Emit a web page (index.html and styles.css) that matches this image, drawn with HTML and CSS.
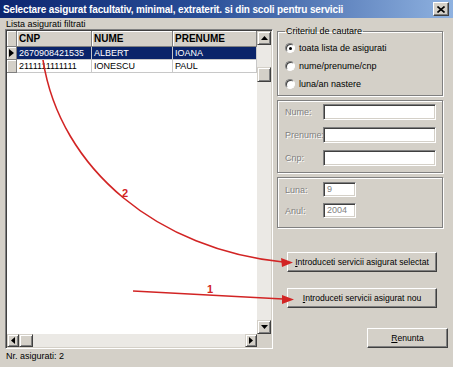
FILE: index.html
```html
<!DOCTYPE html>
<html>
<head>
<meta charset="utf-8">
<link rel="stylesheet" href="styles.css">
</head>
<body>
<div class="window">
  <div class="titlebar">
    <span class="title">Selectare asigurat facultativ, minimal, extraterit. si din scoli pentru servicii</span>
    <span class="close"><svg width="8" height="7" viewBox="0 0 8 7"><path d="M0.5 0.5 L7.5 6.5 M7.5 0.5 L0.5 6.5" stroke="#000" stroke-width="1.6"/></svg></span>
  </div>
  <div class="main">
    <div class="left">
      <div class="caption">Lista asigurati filtrati</div>
      <div class="gridframe">
        <div class="gridtop">
          <div class="table">
            <div class="row head">
              <div class="cell ind"></div>
              <div class="cell c1">CNP</div>
              <div class="cell c2">NUME</div>
              <div class="cell c3">PRENUME</div>
            </div>
            <div class="row sel">
              <div class="cell ind"><svg width="5" height="8" viewBox="0 0 5 8"><path d="M0 0 L5 4 L0 8 Z" fill="#000"/></svg></div>
              <div class="cell c1">2670908421535</div>
              <div class="cell c2">ALBERT</div>
              <div class="cell c3">IOANA</div>
            </div>
            <div class="row">
              <div class="cell ind"></div>
              <div class="cell c1">2111111111111</div>
              <div class="cell c2">IONESCU</div>
              <div class="cell c3">PAUL</div>
            </div>
          </div>
          <div class="vscroll">
            <div class="sbtn vbtn"><svg width="7" height="4" viewBox="0 0 7 4"><path d="M0 4 L3.5 0 L7 4 Z" fill="#000"/></svg></div>
            <div class="vtrack"><div class="vthumb"></div></div>
            <div class="sbtn vbtn"><svg width="7" height="4" viewBox="0 0 7 4"><path d="M0 0 L3.5 4 L7 0 Z" fill="#000"/></svg></div>
          </div>
        </div>
        <div class="hscroll">
          <div class="sbtn hbtn"><svg width="4" height="7" viewBox="0 0 4 7"><path d="M4 0 L0 3.5 L4 7 Z" fill="#000"/></svg></div>
          <div class="sbtn hthumb"></div>
          <div class="htrack"></div>
          <div class="sbtn hbtn"><svg width="4" height="7" viewBox="0 0 4 7"><path d="M0 0 L4 3.5 L0 7 Z" fill="#000"/></svg></div>
          <div class="corner"></div>
        </div>
      </div>
      <div class="status">Nr. asigurati: 2</div>
    </div>
    <div class="right">
      <fieldset class="group criteria">
        <legend>Criteriul de cautare</legend>
        <div class="radiorow"><span class="radio checked"></span><span>toata lista de asigurati</span></div>
        <div class="radiorow"><span class="radio"></span><span>nume/prenume/cnp</span></div>
        <div class="radiorow"><span class="radio"></span><span>luna/an nastere</span></div>
      </fieldset>
      <div class="box names">
        <div class="field"><span class="lbl">Nume:</span><span class="input wide"></span></div>
        <div class="field"><span class="lbl">Prenume:</span><span class="input wide"></span></div>
        <div class="field"><span class="lbl">Cnp:</span><span class="input wide"></span></div>
      </div>
      <div class="box dates">
        <div class="field"><span class="lbl">Luna:</span><span class="input short">9</span></div>
        <div class="field"><span class="lbl">Anul:</span><span class="input short">2004</span></div>
      </div>
      <div class="buttons">
        <div class="btn b1"><span><u>I</u>ntroduceti servicii asigurat selectat</span></div>
        <div class="btn b2"><span><u>I</u>ntroduceti servicii asigurat nou</span></div>
        <div class="btn b3"><span><u>R</u>enunta</span></div>
      </div>
    </div>
  </div>
  <svg class="arrows" width="453" height="367" viewBox="0 0 453 367">
    <path d="M43 60 C 60 170, 160 250, 283 262" fill="none" stroke="#d22424" stroke-width="1.6"/>
    <path d="M293 262.5 L281 258 L282 267 Z" fill="#d22424"/>
    <path d="M133 291 L283 299" fill="none" stroke="#d22424" stroke-width="1.6"/>
    <path d="M294 299.6 L282 295 L282 304 Z" fill="#d22424"/>
    <text x="122" y="197" class="num">2</text>
    <text x="207" y="293" class="num">1</text>
  </svg>
</div>
</body>
</html>
```

FILE: styles.css
```css
html, body {
  margin: 0;
  padding: 0;
  background: #d4d0c8;
}

.window {
  position: relative;
  width: 453px;
  height: 367px;
  overflow: hidden;
  background: #d4d0c8;
  font-family: "Liberation Sans", Arial, sans-serif;
  font-size: 9px;
  color: #000;
}

.titlebar {
  height: 18px;
  display: flex;
  align-items: center;
  justify-content: space-between;
  padding: 0 4px 0 3px;
  background: linear-gradient(to right, #0c2670 0%, #2a4f98 45%, #8fb2e0 100%);
}

.title {
  color: #fff;
  font-weight: bold;
  font-size: 10px;
  letter-spacing: -0.15px;
  white-space: nowrap;
}

.close {
  width: 16px;
  height: 14px;
  box-sizing: border-box;
  background: #d4d0c8;
  border: 1px solid;
  border-color: #fff #404040 #404040 #fff;
  box-shadow: inset -1px -1px 0 #808080;
  display: flex;
  align-items: center;
  justify-content: center;
}

.main {
  display: flex;
  padding: 0 5px;
}

.left {
  width: 268px;
  display: flex;
  flex-direction: column;
}

.caption {
  height: 11px;
  box-sizing: border-box;
  padding: 2px 0 0 1px;
  line-height: 9px;
}

.gridframe {
  height: 320px;
  box-sizing: border-box;
  border: 1px solid;
  border-color: #808080 #fff #fff #808080;
  box-shadow: inset 1px 1px 0 #404040, inset -1px -1px 0 #d4d0c8;
  padding: 1px;
  display: flex;
  flex-direction: column;
}

.gridtop {
  display: flex;
  height: 303px;
}

.table {
  width: 250px;
  background: #fff;
}

.row {
  display: flex;
  height: 13px;
}

.row.head {
  height: 16px;
}

.cell {
  box-sizing: border-box;
  border-right: 1px solid #c8c8c8;
  border-bottom: 1px solid #c8c8c8;
  padding-left: 2px;
  line-height: 12px;
  white-space: nowrap;
  overflow: hidden;
  font-size: 9px;
}

.c1 { width: 75px; }
.c2 { width: 81px; }
.c3 { width: 84px; }

.ind {
  width: 10px;
  padding: 0;
  background: #d4d0c8;
  border-right: 1px solid #808080;
  border-bottom: 1px solid #808080;
  box-shadow: inset 1px 1px 0 #fff;
  display: flex;
  align-items: center;
  justify-content: center;
}

.head .cell {
  background: #d4d0c8;
  border-right: 1px solid #808080;
  border-bottom: 1px solid #808080;
  box-shadow: inset 1px 1px 0 #fff;
  font-weight: bold;
  line-height: 15px;
  font-size: 10px;
}

.sel .c1, .sel .c2, .sel .c3 {
  background: #0a246a;
  color: #fff;
}

.vscroll {
  width: 14px;
  display: flex;
  flex-direction: column;
}

.sbtn {
  box-sizing: border-box;
  background: #d4d0c8;
  border: 1px solid;
  border-color: #d4d0c8 #404040 #404040 #d4d0c8;
  box-shadow: inset 1px 1px 0 #fff, inset -1px -1px 0 #808080;
  display: flex;
  align-items: center;
  justify-content: center;
}

.vbtn {
  height: 14px;
}

.vtrack {
  flex: 1;
  background: #ebe9e5;
  padding-top: 22px;
}

.vthumb {
  height: 15px;
  box-sizing: border-box;
  background: #d4d0c8;
  border: 1px solid;
  border-color: #d4d0c8 #404040 #404040 #d4d0c8;
  box-shadow: inset 1px 1px 0 #fff, inset -1px -1px 0 #808080;
}

.hscroll {
  display: flex;
  height: 13px;
}

.hbtn {
  width: 12px;
}

.hthumb {
  width: 14px;
}

.htrack {
  flex: 1;
  background: #ebe9e5;
}

.corner {
  width: 14px;
  background: #d4d0c8;
}

.status {
  height: 12px;
  line-height: 12px;
  padding-left: 1px;
  margin-top: 1px;
}

.right {
  margin-left: 4px;
  width: 171px;
  display: flex;
  flex-direction: column;
}

.group {
  margin: 8px 0 0 0;
  padding: 3px 0 2px 7px;
  width: 166px;
  box-sizing: border-box;
  border: 1px solid #808080;
  box-shadow: 1px 1px 0 #fff, inset 1px 1px 0 #fff;
  min-width: 0;
}

.group legend {
  padding: 0 1px;
  margin-left: 0;
  line-height: 10px;
  font-size: 9px;
}

.radiorow {
  display: flex;
  align-items: center;
  height: 18px;
  gap: 4px;
}

.radio {
  position: relative;
  width: 10px;
  height: 10px;
  box-sizing: border-box;
  border-radius: 50%;
  background: #fff;
  border: 1px solid;
  border-color: #808080 #fff #fff #808080;
  box-shadow: inset 1px 1px 0 #404040;
}

.radio.checked::after {
  content: "";
  position: absolute;
  left: 3px;
  top: 3px;
  width: 3px;
  height: 3px;
  border-radius: 50%;
  background: #000;
}

.box {
  width: 166px;
  box-sizing: border-box;
  border: 1px solid #808080;
  box-shadow: 1px 1px 0 #fff, inset 1px 1px 0 #fff;
  padding: 3px 0 0 7px;
  display: flex;
  flex-direction: column;
}

.names {
  margin-top: 4px;
  height: 73px;
  gap: 7px;
}

.dates {
  margin-top: 4px;
  height: 51px;
  gap: 6px;
  padding-top: 4px;
}

.field {
  display: flex;
  align-items: center;
}

.lbl {
  width: 38px;
  color: #808080;
  text-shadow: 1px 1px 0 #fff;
  white-space: nowrap;
}

.input {
  box-sizing: border-box;
  background: #fff;
  border: 1px solid;
  border-color: #808080 #fff #fff #808080;
  box-shadow: inset 1px 1px 0 #404040, inset -1px -1px 0 #d4d0c8;
  color: #808080;
  padding-left: 3px;
  line-height: 13px;
}

.wide {
  width: 113px;
  height: 16px;
}

.short {
  width: 33px;
  height: 15px;
}

.buttons {
  display: flex;
  flex-direction: column;
  align-items: flex-start;
  margin-top: 24px;
  font-size: 8.6px;
}

.btn {
  height: 20px;
  box-sizing: border-box;
  background: #d4d0c8;
  border: 1px solid;
  border-color: #fff #404040 #404040 #fff;
  box-shadow: inset -1px -1px 0 #808080;
  display: flex;
  align-items: center;
  justify-content: center;
  white-space: nowrap;
}

.b1 { width: 150px; margin-left: 10px; }
.b2 { width: 150px; margin-left: 10px; margin-top: 16px; }
.b3 { width: 81px; margin-left: 90px; margin-top: 20px; }

.arrows {
  position: absolute;
  left: 0;
  top: 0;
  pointer-events: none;
}

.num {
  fill: #d22424;
  font-family: "Liberation Sans", Arial, sans-serif;
  font-weight: bold;
  font-size: 11px;
}
```
